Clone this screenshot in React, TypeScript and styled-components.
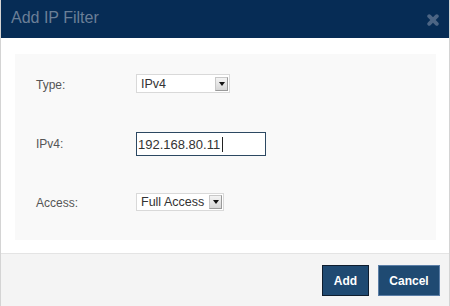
import React from "react";
import styled, { createGlobalStyle } from "styled-components";

const GlobalStyle = createGlobalStyle`
  html, body {
    margin: 0;
    padding: 0;
    background: #ffffff;
    font-family: "Liberation Sans", Arial, Helvetica, sans-serif;
  }
`;

const Modal = styled.div`
  width: 450px;
  height: 306px;
  box-sizing: border-box;
  border-left: 1px solid #d4d4d4;
  border-right: 1px solid #d4d4d4;
  display: flex;
  flex-direction: column;
  background: #ffffff;
  overflow: hidden;
`;

const Header = styled.div`
  height: 38px;
  flex: none;
  margin: 0 -1px;
  background: #062c55;
  display: flex;
  align-items: center;
  justify-content: space-between;
  padding: 0 11px 0 11px;
  box-sizing: border-box;
`;

const Title = styled.div`
  color: #6b7f97;
  font-size: 16px;
  line-height: 20px;
  margin-top: -2px;
`;

const Body = styled.div`
  flex: 1;
  padding: 16px 13px 0 14px;
  border-bottom: 1px solid #e4e4e4;
`;

const Panel = styled.div`
  height: 186px;
  background: #f9f9f9;
  display: grid;
  grid-template-columns: 100px 1fr;
  grid-auto-rows: 59px;
  align-items: center;
  padding-left: 21px;
`;

const Label = styled.div`
  color: #555555;
  font-size: 12px;
  margin-top: 3px;
`;

const Select = styled.div<{ $w: number; $h: number }>`
  width: ${(p) => p.$w}px;
  height: ${(p) => p.$h}px;
  box-sizing: border-box;
  border: 1px solid #d9d9d9;
  background: #ffffff;
  display: flex;
  align-items: center;
  justify-content: space-between;
  padding-left: 4px;
  color: #333333;
  font-size: 12.5px;
  white-space: nowrap;
`;

const Arrow = styled.div`
  width: 13px;
  height: 14px;
  margin-right: 1px;
  box-sizing: border-box;
  border: 1px solid #9a9a9a;
  border-top-color: #c8c8c8;
  border-left-color: #c8c8c8;
  background: linear-gradient(#f4f4f4, #d6d6d6);
  display: flex;
  align-items: center;
  justify-content: center;
  &::after {
    content: "";
    border-left: 3px solid transparent;
    border-right: 3px solid transparent;
    border-top: 4px solid #111111;
  }
`;

const Input = styled.div`
  width: 130px;
  height: 24px;
  box-sizing: border-box;
  border: 1px solid #2c4862;
  background: #ffffff;
  display: flex;
  align-items: center;
  padding-left: 1px;
  color: #333333;
  font-size: 13px;
  margin-top: 3px;
`;

const Caret = styled.span`
  display: inline-block;
  width: 1px;
  height: 15px;
  background: #222222;
  margin-left: 2px;
`;

const Footer = styled.div`
  height: 52px;
  flex: none;
  background: #f4f4f4;
  display: flex;
  justify-content: flex-end;
  align-items: flex-start;
  gap: 9px;
  padding: 11px 9px 0 0;
  box-sizing: border-box;
`;

const Button = styled.button<{ $w: number; $dark?: boolean }>`
  width: ${(p) => p.$w}px;
  height: 31px;
  box-sizing: border-box;
  background: #1f4a72;
  border: 1px solid ${(p) => (p.$dark ? "#0e1d2e" : "#5b7ea6")};
  color: #ffffff;
  font-family: "Liberation Sans", Arial, Helvetica, sans-serif;
  font-weight: bold;
  font-size: 12px;
  padding: 0;
`;

const Close = () => (
  <svg width="12" height="12" viewBox="0 0 12 12" style={{ marginTop: 2 }}>
    <path d="M2.2 2.2 L9.8 9.8 M9.8 2.2 L2.2 9.8" stroke="#4c6584" strokeWidth="3.8" strokeLinecap="round" />
  </svg>
);

export default function App() {
  return (
    <>
      <GlobalStyle />
      <Modal>
        <Header>
          <Title>Add IP Filter</Title>
          <Close />
        </Header>
        <Body>
          <Panel>
            <Label>Type:</Label>
            <div>
              <Select $w={94} $h={19}>
                <span>IPv4</span>
                <Arrow />
              </Select>
            </div>
            <Label>IPv4:</Label>
            <div>
              <Input>
                192.168.80.11
                <Caret />
              </Input>
            </div>
            <Label>Access:</Label>
            <div>
              <Select $w={88} $h={18}>
                <span>Full Access</span>
                <Arrow />
              </Select>
            </div>
          </Panel>
        </Body>
        <Footer>
          <Button $w={47} $dark>
            Add
          </Button>
          <Button $w={62}>Cancel</Button>
        </Footer>
      </Modal>
    </>
  );
}
